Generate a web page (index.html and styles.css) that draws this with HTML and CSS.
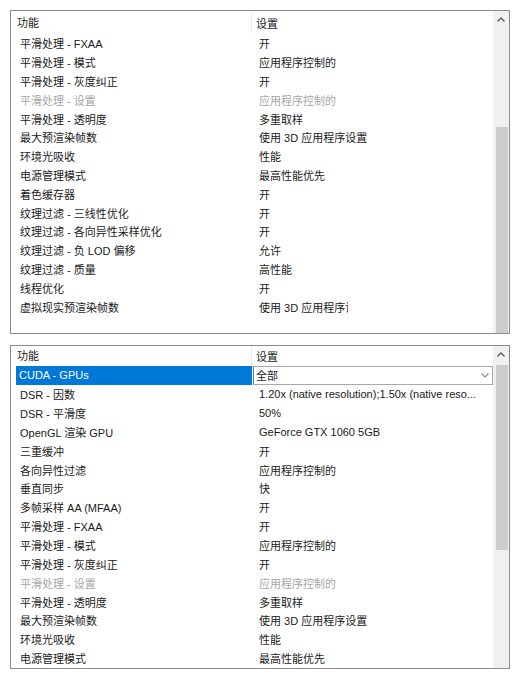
FILE: index.html
```html
<!DOCTYPE html>
<html lang="zh-CN">
<head>
    <meta charset="UTF-8">
    <meta name="viewport" content="width=device-width, initial-scale=1.0">
    <title>3D 设置</title>
    <link rel="stylesheet" href="styles.css">
</head>
<body>
<div class="panel panel-top">
    <div class="list">
        <div class="head"><div class="c1">功能</div><div class="c2">设置</div></div>
        <div class="row"><div class="c1">平滑处理 - FXAA</div><div class="c2">开</div></div>
        <div class="row"><div class="c1">平滑处理 - 模式</div><div class="c2">应用程序控制的</div></div>
        <div class="row"><div class="c1">平滑处理 - 灰度纠正</div><div class="c2">开</div></div>
        <div class="row off"><div class="c1">平滑处理 - 设置</div><div class="c2">应用程序控制的</div></div>
        <div class="row"><div class="c1">平滑处理 - 透明度</div><div class="c2">多重取样</div></div>
        <div class="row"><div class="c1">最大预渲染帧数</div><div class="c2">使用 3D 应用程序设置</div></div>
        <div class="row"><div class="c1">环境光吸收</div><div class="c2">性能</div></div>
        <div class="row"><div class="c1">电源管理模式</div><div class="c2">最高性能优先</div></div>
        <div class="row"><div class="c1">着色缓存器</div><div class="c2">开</div></div>
        <div class="row"><div class="c1">纹理过滤 - 三线性优化</div><div class="c2">开</div></div>
        <div class="row"><div class="c1">纹理过滤 - 各向异性采样优化</div><div class="c2">开</div></div>
        <div class="row"><div class="c1">纹理过滤 - 负 LOD 偏移</div><div class="c2">允许</div></div>
        <div class="row"><div class="c1">纹理过滤 - 质量</div><div class="c2">高性能</div></div>
        <div class="row"><div class="c1">线程优化</div><div class="c2">开</div></div>
        <div class="row"><div class="c1">虚拟现实预渲染帧数</div><div class="c2">使用 3D 应用程序设置</div></div>
    </div>
    <div class="scrollbar">
        <div class="arrow">
            <svg width="8" height="5" viewBox="0 0 8 5"><polyline points="0.5,4.5 4,1 7.5,4.5" fill="none" stroke="#606060" stroke-width="1.4"/></svg>
        </div>
        <div class="thumb"></div>
    </div>
    <div class="mask mask-top"></div>
</div>

<div class="panel panel-bottom">
    <div class="list">
        <div class="head"><div class="c1">功能</div><div class="c2">设置</div></div>
        <div class="row selected">
            <div class="c1">CUDA - GPUs</div>
            <div class="c2">
                <div class="dropdown">
                    <span>全部</span>
                    <svg width="8" height="5" viewBox="0 0 8 5"><polyline points="0.5,0.5 4,4 7.5,0.5" fill="none" stroke="#8a8a8a" stroke-width="1.1"/></svg>
                </div>
            </div>
        </div>
        <div class="row"><div class="c1">DSR - 因数</div><div class="c2">1.20x (native resolution);1.50x (native reso...</div></div>
        <div class="row"><div class="c1">DSR - 平滑度</div><div class="c2">50%</div></div>
        <div class="row"><div class="c1">OpenGL 渲染 GPU</div><div class="c2">GeForce GTX 1060 5GB</div></div>
        <div class="row"><div class="c1">三重缓冲</div><div class="c2">开</div></div>
        <div class="row"><div class="c1">各向异性过滤</div><div class="c2">应用程序控制的</div></div>
        <div class="row"><div class="c1">垂直同步</div><div class="c2">快</div></div>
        <div class="row"><div class="c1">多帧采样 AA (MFAA)</div><div class="c2">开</div></div>
        <div class="row"><div class="c1">平滑处理 - FXAA</div><div class="c2">开</div></div>
        <div class="row"><div class="c1">平滑处理 - 模式</div><div class="c2">应用程序控制的</div></div>
        <div class="row"><div class="c1">平滑处理 - 灰度纠正</div><div class="c2">开</div></div>
        <div class="row off"><div class="c1">平滑处理 - 设置</div><div class="c2">应用程序控制的</div></div>
        <div class="row"><div class="c1">平滑处理 - 透明度</div><div class="c2">多重取样</div></div>
        <div class="row"><div class="c1">最大预渲染帧数</div><div class="c2">使用 3D 应用程序设置</div></div>
        <div class="row"><div class="c1">环境光吸收</div><div class="c2">性能</div></div>
        <div class="row"><div class="c1">电源管理模式</div><div class="c2">最高性能优先</div></div>
    </div>
    <div class="scrollbar">
        <div class="arrow">
            <svg width="8" height="5" viewBox="0 0 8 5"><polyline points="0.5,4.5 4,1 7.5,4.5" fill="none" stroke="#606060" stroke-width="1.4"/></svg>
        </div>
        <div class="thumb"></div>
    </div>
    <div class="mask mask-bottom"></div>
</div>
</body>
</html>
```

FILE: styles.css
```css
body {
    margin: 0;
    padding: 10px 0 0 10px;
    background-color: #fff;
    color: #1a1a1a;
    font-family: "Liberation Sans", "Noto Sans CJK SC", sans-serif;
    font-size: 11px;
}

.panel {
    position: relative;
    width: 500px;
    height: 324px;
    box-sizing: border-box;
    border: 1px solid #8c8c8c;
    display: grid;
    grid-template-columns: 482px 16px;
    overflow: hidden;
}
.panel-bottom {
    margin-top: 11px;
}

.list {
    overflow: hidden;
}
.head, .row {
    display: grid;
    grid-template-columns: 241px 1fr;
    align-items: center;
}
.head {
    height: 23px;
}
.panel-bottom .head {
    height: 20px;
}
.row {
    height: 18.8px;
}
.panel-bottom .row {
    height: 18.85px;
}
.c1, .c2 {
    white-space: nowrap;
    overflow: hidden;
}
.row .c1 {
    padding-left: 9px;
}
.row .c2 {
    padding-left: 7px;
    padding-right: 6px;
}
.head .c1 {
    padding-left: 6px;
    border-right: 1px solid #ececec;
    line-height: 20px;
}
.head .c2 {
    padding-left: 4px;
}
.row.off {
    color: #a6a6a6;
}

/* selected row with the inline dropdown */
.row.selected .c1 {
    margin-left: 5px;
    padding-left: 3px;
    height: 100%;
    line-height: 18.85px;
    background-color: #0078d7;
    color: #fff;
}
.row.selected .c2 {
    padding: 0 0 0 1px;
    height: 100%;
}
.dropdown {
    height: 100%;
    box-sizing: border-box;
    border: 1px solid #a9a9a9;
    border-left: 1px solid #3c8ad4;
    display: flex;
    align-items: center;
    justify-content: space-between;
    padding: 0 3px 0 2px;
}

.scrollbar {
    background-color: #f0f0f0;
    display: flex;
    flex-direction: column;
    align-items: center;
}
.arrow {
    height: 16px;
    display: flex;
    align-items: center;
    justify-content: center;
}
.thumb {
    width: 12px;
    margin-left: 1px;
    background-color: #cdcdcd;
}
.panel-top .thumb {
    margin-top: 100px;
    flex: 1;
}
.panel-bottom .thumb {
    margin-top: 3px;
    height: 185px;
}

/* washed-out corners of the screenshot */
.mask {
    position: absolute;
    background-color: #fff;
}
.mask-top {
    left: 337px;
    top: 286px;
    width: 145px;
    height: 40px;
}
.mask-bottom {
    left: 439px;
    top: 316px;
    width: 43px;
    height: 10px;
}
```
